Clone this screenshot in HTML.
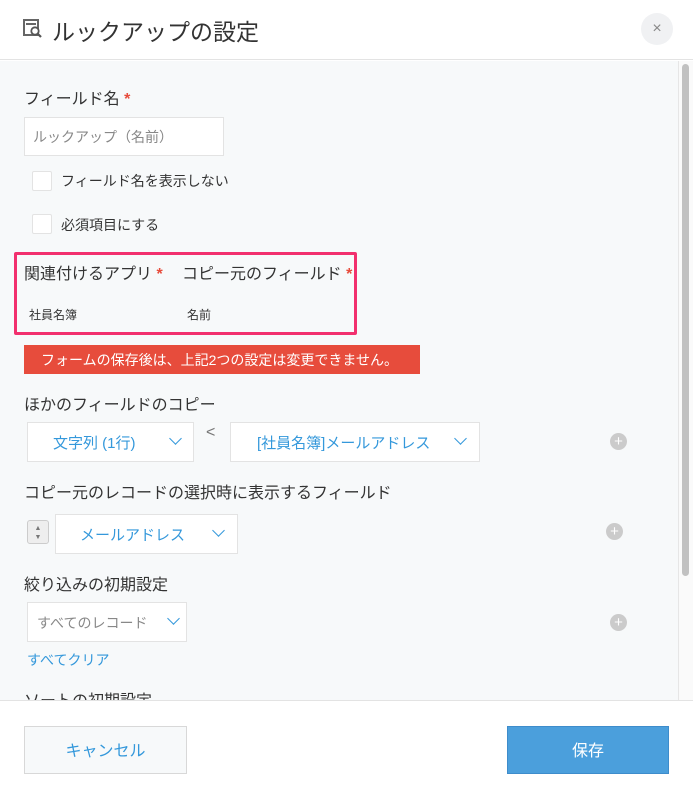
<!DOCTYPE html>
<html><head><meta charset="utf-8"><style>
*{box-sizing:border-box;margin:0;padding:0}
body{width:693px;height:793px;overflow:hidden;background:#fff;font-family:"Liberation Sans","Noto Sans CJK JP",sans-serif;color:#333;position:relative}
.a{position:absolute}
.hdr{left:0;top:0;width:693px;height:60px;background:#fff;border-bottom:1px solid #e3e3e3}
.body{left:0;top:61px;width:693px;height:639px;background:#f7f9fa;overflow:hidden}
.lbl{font-size:16px;color:#333;white-space:nowrap}
.req{color:#e74c3c;font-weight:bold}
.box{background:#fff;border:1px solid #e3e3e3}
.sel{background:#fff;border:1px solid #e3e3e3;color:#3498db;font-size:15px}
.chev{position:absolute;width:9px;height:9px;border-right:1.5px solid #3498db;border-bottom:1.5px solid #3498db;transform:rotate(45deg)}
.plus{width:17px;height:17px;border-radius:50%;background:#cbcbcb;color:#fff;font-size:15px;line-height:17px;text-align:center}
.cb{width:20px;height:20px;background:#fff;border:1px solid #e3e3e3;border-radius:2px}
</style></head><body>
<div class="a hdr">
 <svg class="a" style="left:23px;top:19px" width="21" height="19" viewBox="0 0 21 19"><rect x="1" y="1" width="14" height="15" fill="#fff" stroke="#666" stroke-width="2"/><rect x="3" y="4" width="10" height="2" fill="#666"/><circle cx="12" cy="12" r="3.7" fill="#fff" stroke="#555" stroke-width="1.8"/><line x1="14.6" y1="14.6" x2="18" y2="18" stroke="#555" stroke-width="2.2"/></svg>
 <div class="a" style="left:52px;top:13px;font-size:23px;color:#333">ルックアップの設定</div>
 <div class="a" style="left:641px;top:13px;width:32px;height:32px;border-radius:50%;background:#f0f1f3;text-align:center;line-height:31px;color:#888;font-size:16px">×</div>
</div>
<div class="a body">
 <div class="a lbl" style="left:24px;top:24px">フィールド名 <span class="req">*</span></div>
 <div class="a box" style="left:24px;top:56px;width:200px;height:39px;font-size:14px;color:#888;padding:9px 8px">ルックアップ（名前）</div>
 <div class="a cb" style="left:32px;top:110px"></div>
 <div class="a" style="left:61px;top:110px;font-size:14px">フィールド名を表示しない</div>
 <div class="a cb" style="left:32px;top:153px"></div>
 <div class="a" style="left:61px;top:154px;font-size:14px">必須項目にする</div>
 <div class="a" style="left:14px;top:191px;width:343px;height:83px;border:3px solid #f2306e;border-radius:2px"></div>
 <div class="a lbl" style="left:24px;top:199px">関連付けるアプリ <span class="req">*</span></div>
 <div class="a lbl" style="left:182px;top:199px">コピー元のフィールド <span class="req">*</span></div>
 <div class="a" style="left:29px;top:245px;font-size:12px">社員名簿</div>
 <div class="a" style="left:187px;top:245px;font-size:12px">名前</div>
 <div class="a" style="left:24px;top:284px;width:396px;height:29px;background:#e74c3c;color:#fff;font-size:14px;padding:5px 0 0 17px">フォームの保存後は、上記2つの設定は変更できません。</div>
 <div class="a lbl" style="left:24px;top:330px">ほかのフィールドのコピー</div>
 <div class="a sel" style="left:27px;top:361px;width:167px;height:40px;padding:9px 0 0 25px">文字列 (1行)<span class="chev" style="left:143px;top:11px"></span></div>
 <div class="a" style="left:206px;top:363px;color:#777;font-size:16px">&lt;</div>
 <div class="a sel" style="left:230px;top:361px;width:250px;height:40px;padding:9px 0 0 26px">[社員名簿]メールアドレス<span class="chev" style="left:225px;top:11px"></span></div>
 <div class="a plus" style="left:610px;top:372px">+</div>
 <div class="a lbl" style="left:24px;top:418px">コピー元のレコードの選択時に表示するフィールド</div>
 <div class="a" style="left:27px;top:459px;width:22px;height:24px;border:1px solid #ccc;border-radius:3px;background:#eee;font-size:7px;color:#777;text-align:center;line-height:9px;padding-top:3px">▲<br>▼</div>
 <div class="a sel" style="left:55px;top:453px;width:183px;height:40px;padding:9px 0 0 24px">メールアドレス<span class="chev" style="left:158px;top:11px"></span></div>
 <div class="a plus" style="left:606px;top:462px">+</div>
 <div class="a lbl" style="left:24px;top:510px">絞り込みの初期設定</div>
 <div class="a sel" style="left:27px;top:541px;width:160px;height:40px;padding:10px 0 0 9px;color:#888;font-size:14px">すべてのレコード<span class="chev" style="left:141px;top:11px"></span></div>
 <div class="a plus" style="left:610px;top:553px">+</div>
 <div class="a" style="left:27px;top:589px;font-size:14px;color:#3498db">すべてクリア</div>
 <div class="a lbl" style="left:24px;top:626px">ソートの初期設定</div>
 <div class="a" style="left:678px;top:0;width:15px;height:639px;background:#fafafa;border-left:1px solid #e6e6e6"></div>
 <div class="a" style="left:682px;top:3px;width:7px;height:512px;border-radius:4px;background:#c1c1c1"></div>
</div>
<div class="a" style="left:0;top:700px;width:693px;height:93px;background:#fff;border-top:1px solid #e3e3e3"></div>
<div class="a" style="left:24px;top:726px;width:163px;height:48px;border:1px solid #d8d8d8;background:#f7f9fa;color:#3498db;font-size:16px;text-align:center;line-height:50px">キャンセル</div>
<div class="a" style="left:507px;top:726px;width:162px;height:48px;background:#4b9fdc;border:1px solid #3e8ccb;color:#fff;font-size:16px;text-align:center;line-height:50px">保存</div>
</body></html>
